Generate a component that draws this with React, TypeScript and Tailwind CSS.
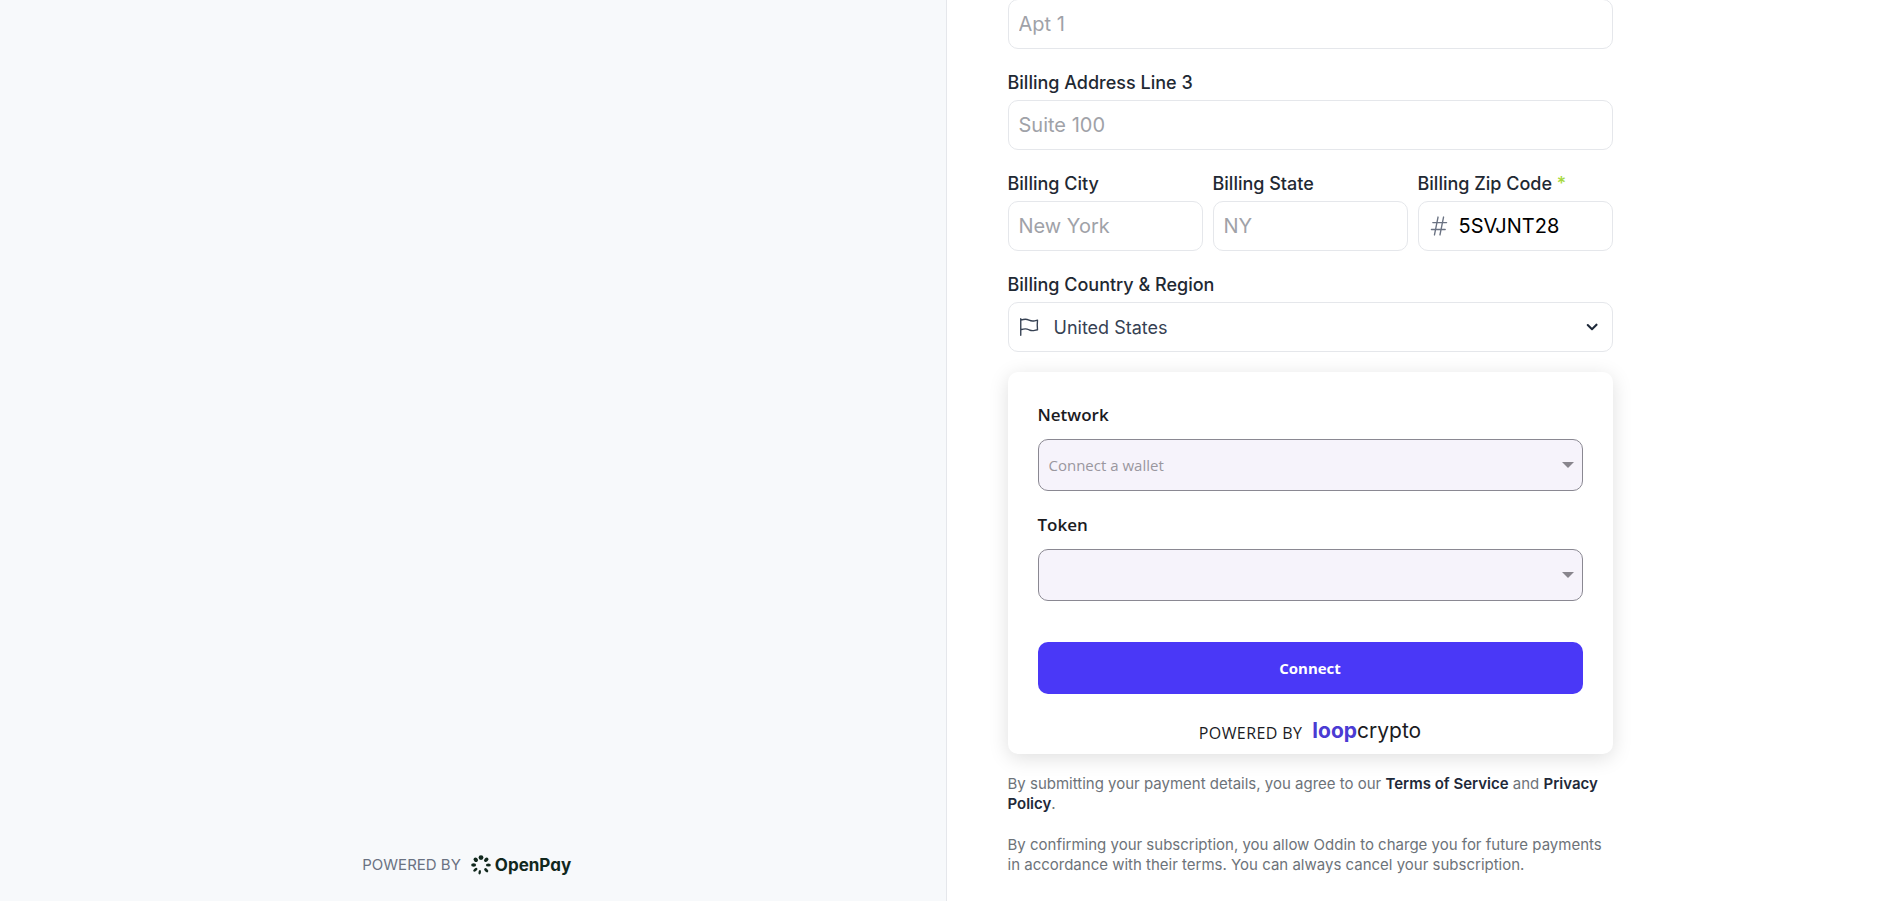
import React from "react";
import { HiOutlineFlag, HiOutlineHashtag } from "react-icons/hi2";

const field =
  "h-[50px] w-full rounded-[10px] border border-gray-200 bg-white px-[10px] text-[20px] text-black placeholder:text-[#9fa2a8] outline-none focus:border-gray-400";
const labelText = "text-[18px] leading-[26px] font-medium text-[#1f2933]";

function Field({ id, label, placeholder }: { id: string; label: string; placeholder: string }) {
  return (
    <div className="flex min-w-0 flex-1 flex-col gap-1">
      <label htmlFor={id} className={labelText}>
        {label}
      </label>
      <input id={id} placeholder={placeholder} className={field} />
    </div>
  );
}

function WalletSelect({ id, label, text }: { id: string; label: string; text: string }) {
  return (
    <div className="flex flex-col gap-[10px]">
      <label htmlFor={id} className="text-[17px] leading-[28px] font-semibold text-[#1b1b1f]">
        {label}
      </label>
      <div className="relative">
        <select
          id={id}
          disabled
          className="h-[52px] w-full appearance-none rounded-[10px] border border-[#8a8892] bg-[#f6f3fb] px-[10px] text-[15px] text-[#9a979f] opacity-100"
        >
          <option>{text}</option>
        </select>
        <svg
          viewBox="0 0 12 6"
          aria-hidden="true"
          className="pointer-events-none absolute top-[23px] right-[9px] h-[6px] w-3 fill-[#88858d]"
        >
          <path d="M0 0h12L6 6z" />
        </svg>
      </div>
    </div>
  );
}

const petals = [
  { angle: 0, rx: 2.4, ry: 2.3 },
  { angle: 45, rx: 1.9, ry: 2.5 },
  { angle: 90, rx: 1.6, ry: 2.5 },
  { angle: 135, rx: 1.5, ry: 2.5 },
  { angle: 190, rx: 1.2, ry: 2.3 },
  { angle: 230, rx: 1.4, ry: 2.5 },
  { angle: 270, rx: 1.7, ry: 2.5 },
  { angle: 315, rx: 2, ry: 2.4 },
];

function OpenPayLogo() {
  return (
    <a href="#openpay" className="flex items-center gap-1 text-[#11281d]">
      <svg viewBox="0 0 20 20" aria-hidden="true" className="size-5 fill-current">
        {petals.map(({ angle, rx, ry }) => (
          <ellipse key={angle} cx="10" cy="2.6" rx={rx} ry={ry} transform={`rotate(${angle} 10 10)`} />
        ))}
      </svg>
      <span className="text-[17px] leading-6 font-bold [font-feature-settings:'cv11']">OpenPay</span>
    </a>
  );
}

export default function App() {
  return (
    <div className="grid min-h-screen grid-cols-2 overflow-hidden bg-white font-['Inter',sans-serif]">
      <aside className="flex items-end justify-center border-r border-gray-200 bg-[#f7f9fb] pr-3 pb-6">
        <div className="flex items-center gap-[10px]">
          <span className="text-[15px] leading-6 text-gray-500">POWERED BY</span>
          <OpenPayLogo />
        </div>
      </aside>

      <main className="pl-[61px]">
        <form className="-mt-px flex max-w-[605px] flex-col gap-[21px]">
          <input aria-label="Billing Address Line 2" placeholder="Apt 1" className={field} />
          <Field id="line3" label="Billing Address Line 3" placeholder="Suite 100" />
          <div className="flex gap-[10px]">
            <Field id="city" label="Billing City" placeholder="New York" />
            <Field id="state" label="Billing State" placeholder="NY" />
            <div className="flex min-w-0 flex-1 flex-col gap-1">
              <label htmlFor="zip" className={labelText}>
                Billing Zip Code <span className="text-[#a5d93c]">*</span>
              </label>
              <div className="relative">
                <HiOutlineHashtag className="pointer-events-none absolute top-[14px] left-[10px] size-[22px] text-gray-500" />
                <input
                  id="zip"
                  defaultValue="5SVJNT28"
                  className="h-[50px] w-full rounded-[10px] border border-gray-200 bg-white pr-[10px] pl-10 text-[20px] text-black outline-none"
                />
              </div>
            </div>
          </div>
          <div className="flex flex-col gap-1">
            <label htmlFor="country" className={labelText}>
              Billing Country &amp; Region
            </label>
            <div className="relative">
              <HiOutlineFlag className="pointer-events-none absolute top-[14px] left-[10px] size-[22px] text-gray-700" />
              <select
                id="country"
                className="h-[50px] w-full appearance-none rounded-[10px] border border-gray-200 bg-white pr-10 pl-[45px] text-[18px] text-gray-700 outline-none"
              >
                <option>United States</option>
              </select>
              <svg
                viewBox="0 0 20 20"
                aria-hidden="true"
                className="pointer-events-none absolute top-[15px] right-[11px] size-5 fill-gray-800"
              >
                <path d="M5 7.3a1.1 1.1 0 0 1 1.5 0L10 10.7l3.5-3.4a1.1 1.1 0 1 1 1.5 1.5l-4.3 4.1a1 1 0 0 1-1.4 0L5 8.8a1.1 1.1 0 0 1 0-1.5z" />
              </svg>
            </div>
          </div>

          <section className="-mt-px flex flex-col gap-5 rounded-[10px] bg-white px-[30px] pt-[29px] pb-[10px] font-['Open_Sans',sans-serif] shadow-[0_4px_20px_rgba(0,0,0,0.13)]">
            <WalletSelect id="network" label="Network" text="Connect a wallet" />
            <WalletSelect id="token" label="Token" text="" />
            <button
              type="button"
              className="mt-[21px] h-[52px] w-full rounded-[10px] bg-[#4a38f7] text-[15px] font-bold text-white"
            >
              Connect
            </button>
            <div className="flex items-center justify-center gap-[10px] pt-1 leading-[26px]">
              <span className="pt-1 text-[16px] leading-[22px] tracking-wide text-[#1b1b1f]">POWERED BY</span>
              <a
                href="#loopcrypto"
                className="font-['Inter',sans-serif] text-[21px] text-[#1b1b1f] [font-feature-settings:'cv11']"
              >
                <span className="font-bold text-[#4b3bd3]">loop</span>crypto
              </a>
            </div>
          </section>

          <div className="-mt-px flex flex-col gap-[21px] text-[15px] leading-5 text-[#6d7379]">
            <p>
              By submitting your payment details, you agree to our{" "}
              <a href="#terms" className="font-semibold text-gray-800">Terms of Service</a> and{" "}
              <a href="#privacy" className="font-semibold text-gray-800">Privacy Policy</a>.
            </p>
            <p>
              By confirming your subscription, you allow Oddin to charge you for future payments in accordance with their
              terms. You can always cancel your subscription.
            </p>
          </div>
        </form>
      </main>
    </div>
  );
}
